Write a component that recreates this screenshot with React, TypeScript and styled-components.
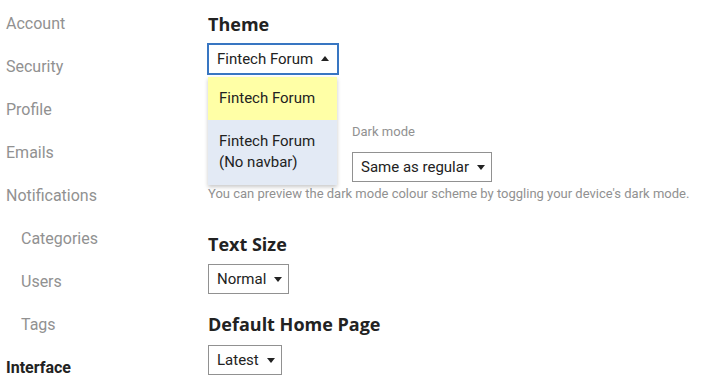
import React from "react";
import styled, { createGlobalStyle } from "styled-components";

const Global = createGlobalStyle`
  html, body { margin: 0; padding: 0; background: #fff; }
  body { font-family: Roboto, "Liberation Sans", sans-serif; color: #222; }
`;

const Page = styled.div`
  display: flex;
  width: 704px;
  height: 385px;
  overflow: hidden;
`;

const Sidebar = styled.nav`
  width: 208px;
  flex: none;
  padding-top: 2px;
  display: flex;
  flex-direction: column;
`;

const NavItem = styled.div<{ $sub?: boolean; $active?: boolean }>`
  height: 43px;
  line-height: 43px;
  font-size: 16px;
  padding-left: ${(p) => (p.$sub ? 21 : 6)}px;
  color: ${(p) => (p.$active ? "#222" : "#919191")};
  font-weight: ${(p) => (p.$active ? 700 : 400)};
  white-space: nowrap;
`;

const Main = styled.main`
  flex: 1;
  padding-top: 12px;
  display: flex;
  flex-direction: column;
  align-items: flex-start;
`;

const Heading = styled.h2<{ $mt?: number }>`
  margin: ${(p) => p.$mt ?? 0}px 0 0;
  font-family: "Open Sans", sans-serif;
  font-weight: 700;
  font-size: 18px;
  line-height: 24px;
  color: #222;
`;

const SelectBox = styled.div<{ $open?: boolean; $mt?: number }>`
  position: relative;
  margin-top: ${(p) => p.$mt ?? 8}px;
  margin-left: ${(p) => (p.$open ? -1 : 0)}px;
  height: ${(p) => (p.$open ? 32 : 30)}px;
  box-sizing: border-box;
  border: ${(p) => (p.$open ? "2px solid #3876c2" : "1px solid #919191")};
  padding: 0 ${(p) => (p.$open ? 8 : 6)}px 0 8px;
  display: flex;
  align-items: center;
  gap: 8px;
  font-size: 15px;
  color: #222;
  background: #fff;
  white-space: nowrap;
`;

const Caret = styled.span<{ $up?: boolean }>`
  width: 0;
  height: 0;
  border-left: 4.5px solid transparent;
  border-right: 4.5px solid transparent;
  ${(p) =>
    p.$up
      ? "border-bottom: 5px solid #222;"
      : "border-top: 5px solid #222;"}
  margin-top: ${(p) => (p.$up ? -1 : 1)}px;
`;

const Menu = styled.div`
  position: absolute;
  top: 32px;
  left: -1px;
  width: 129px;
  box-shadow: 0 2px 4px rgba(0, 0, 0, 0.22);
  z-index: 5;
  display: flex;
  flex-direction: column;
`;

const MenuItem = styled.div<{ $selected?: boolean }>`
  padding: 11px;
  min-height: ${(p) => (p.$selected ? 21 : 43)}px;
  font-size: 15px;
  line-height: 21px;
  color: #222;
  white-space: normal;
  background: ${(p) => (p.$selected ? "#ffffa6" : "#e3eaf5")};
`;

const SchemeRow = styled.div`
  margin-top: 48px;
  display: flex;
  gap: 14px;
`;

const SchemeCol = styled.div<{ $w?: number }>`
  display: flex;
  flex-direction: column;
  align-items: flex-start;
  ${(p) => (p.$w ? `width: ${p.$w}px;` : "")}
`;

const Label = styled.div`
  font-size: 13px;
  line-height: 18px;
  color: #919191;
`;

const Help = styled.div`
  margin-top: 3px;
  font-size: 13px;
  line-height: 18px;
  color: #919191;
  white-space: nowrap;
`;

const ThemeWrap = styled.div`
  position: relative;
  z-index: 2;
`;

export default function App() {
  const nav: { label: string; sub?: boolean; active?: boolean }[] = [
    { label: "Account" },
    { label: "Security" },
    { label: "Profile" },
    { label: "Emails" },
    { label: "Notifications" },
    { label: "Categories", sub: true },
    { label: "Users", sub: true },
    { label: "Tags", sub: true },
    { label: "Interface", active: true },
  ];
  return (
    <Page>
      <Global />
      <Sidebar>
        {nav.map((n) => (
          <NavItem key={n.label} $sub={n.sub} $active={n.active}>
            {n.label}
          </NavItem>
        ))}
      </Sidebar>
      <Main>
        <Heading>Theme</Heading>
        <ThemeWrap>
          <SelectBox $open $mt={7}>
            Fintech Forum <Caret $up />
            <Menu>
              <MenuItem $selected>Fintech Forum</MenuItem>
              <MenuItem>
                Fintech Forum
                <br />
                (No navbar)
              </MenuItem>
            </Menu>
          </SelectBox>
        </ThemeWrap>
        <SchemeRow>
          <SchemeCol $w={130} />
          <SchemeCol>
            <Label>Dark mode</Label>
            <SelectBox $mt={11}>
              Same as regular <Caret />
            </SelectBox>
          </SchemeCol>
        </SchemeRow>
        <Help>
          You can preview the dark mode colour scheme by toggling your device's dark mode.
        </Help>
        <Heading $mt={29}>Text Size</Heading>
        <SelectBox $mt={8}>
          Normal <Caret />
        </SelectBox>
        <Heading $mt={18}>Default Home Page</Heading>
        <SelectBox $mt={9}>
          Latest <Caret />
        </SelectBox>
      </Main>
    </Page>
  );
}
